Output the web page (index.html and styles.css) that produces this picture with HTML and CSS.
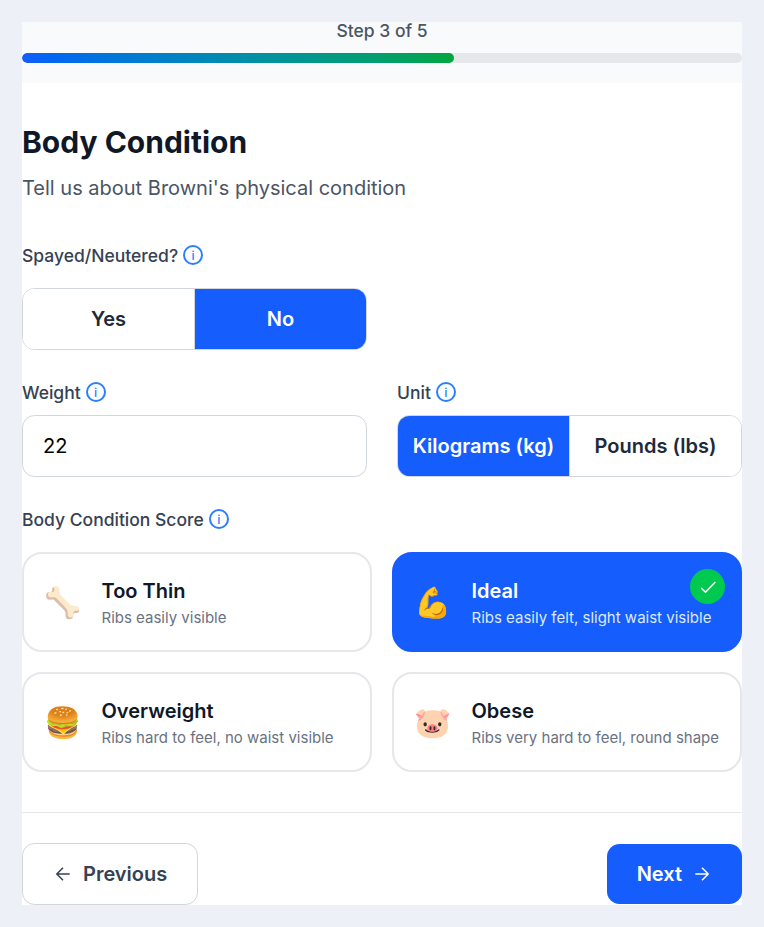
FILE: index.html
```html
<!DOCTYPE html>
<html lang="en">
<head>
    <meta charset="UTF-8">
    <meta name="viewport" content="width=device-width, initial-scale=1.0">
    <title>Body Condition</title>
    <link rel="stylesheet" href="styles.css">
</head>
<body>
    <main class="wizard">
        <header class="progress">
            <div class="progress-label">Step 3 of 5</div>
            <div class="progress-track">
                <div class="progress-fill" style="width: 60%"></div>
            </div>
        </header>

        <h1 class="title">Body Condition</h1>
        <p class="subtitle">Tell us about Browni's physical condition</p>

        <div class="row">
            <div class="field">
                <div class="label label-wide">Spayed/Neutered? <span class="info">i</span></div>
                <div class="toggle">
                    <button class="option">Yes</button>
                    <button class="option active">No</button>
                </div>
            </div>
        </div>

        <div class="row">
            <div class="field">
                <label class="label" for="weight">Weight <span class="info">i</span></label>
                <input class="input" id="weight" type="text" value="22">
            </div>
            <div class="field">
                <div class="label">Unit <span class="info">i</span></div>
                <div class="toggle">
                    <button class="option active">Kilograms (kg)</button>
                    <button class="option">Pounds (lbs)</button>
                </div>
            </div>
        </div>

        <div class="label label-wide">Body Condition Score <span class="info">i</span></div>
        <div class="scores">
            <div class="score">
                <span class="emoji">🦴</span>
                <div>
                    <div class="score-name">Too Thin</div>
                    <div class="score-text">Ribs easily visible</div>
                </div>
            </div>
            <div class="score selected">
                <span class="emoji">💪</span>
                <div>
                    <div class="score-name">Ideal</div>
                    <div class="score-text">Ribs easily felt, slight waist visible</div>
                </div>
                <span class="check">
                    <svg width="20" height="20" viewBox="0 0 20 20"><path d="M3.2 11l4.3 4.3L17.3 5"/></svg>
                </span>
            </div>
            <div class="score">
                <span class="emoji">🍔</span>
                <div>
                    <div class="score-name">Overweight</div>
                    <div class="score-text">Ribs hard to feel, no waist visible</div>
                </div>
            </div>
            <div class="score">
                <span class="emoji">🐷</span>
                <div>
                    <div class="score-name">Obese</div>
                    <div class="score-text">Ribs very hard to feel, round shape</div>
                </div>
            </div>
        </div>

        <footer class="actions">
            <button class="btn btn-prev">
                <svg width="20" height="20" viewBox="0 0 20 20"><path d="M16.7 10H4M10 3.8L3.8 10l6.2 6.2"/></svg>
                Previous
            </button>
            <button class="btn btn-next">
                Next
                <svg width="20" height="20" viewBox="0 0 20 20"><path d="M3.3 10H16M10 3.8l6.2 6.2-6.2 6.2"/></svg>
            </button>
        </footer>
    </main>
</body>
</html>
```
FILE: styles.css
```css
* {
    box-sizing: border-box;
}
body {
    margin: 0;
    padding: 22px;
    background-color: #edf0f6;
    font-family: Inter, sans-serif;
    font-size: 20px;
    color: #101828;
}
button,
input {
    font: inherit;
    margin: 0;
}
svg {
    display: block;
    fill: none;
    stroke: currentColor;
    stroke-width: 1.5;
}
.wizard {
    background-color: #fff;
}

/* progress */
.progress {
    height: 61px;
    background-color: #f9fafc;
}
.progress-label {
    height: 31px;
    line-height: 17px;
    font-size: 17.5px;
    font-weight: 500;
    text-align: center;
    color: #4a5565;
}
.progress-track {
    height: 10px;
    border-radius: 5px;
    background-color: #e5e7eb;
    overflow: hidden;
}
.progress-fill {
    height: 100%;
    border-radius: 5px;
    background: linear-gradient(to right in oklab, #155dfc, #00a63e);
}

.title {
    margin: 0;
    padding-top: 40px;
    font-size: 30px;
    line-height: 38px;
    font-weight: 700;
}
.subtitle {
    margin: 12px 0 42px;
    line-height: 30px;
    color: #4a5565;
}

/* form fields */
.row {
    display: grid;
    grid-template-columns: 1fr 1fr;
    gap: 30px;
    margin-bottom: 32px;
}
.label {
    display: flex;
    align-items: center;
    gap: 5px;
    height: 20px;
    margin-bottom: 13px;
    font-size: 17.5px;
    font-weight: 500;
    color: #364153;
}
.label-wide {
    margin-bottom: 23px;
}
.info {
    width: 20px;
    height: 20px;
    border: 2px solid #2b7fff;
    border-radius: 50%;
    font-size: 12.5px;
    line-height: 17px;
    text-align: center;
    color: #2b7fff;
}
.toggle {
    display: flex;
    height: 62px;
    border: 1px solid #d1d5dc;
    border-radius: 12.5px;
    overflow: hidden;
}
.option {
    flex: 1 1 0;
    padding: 0;
    border: 0;
    background-color: #fff;
    font-weight: 600;
    white-space: nowrap;
    color: #1e2939;
}
.option + .option {
    border-left: 1px solid #d1d5dc;
}
.option.active {
    background-color: #155dfc;
    color: #fff;
}
.input {
    display: block;
    width: 100%;
    height: 62px;
    padding: 0 20px;
    border: 1px solid #d1d5dc;
    border-radius: 12.5px;
    background-color: #fff;
    color: #000;
}

/* condition cards */
.scores {
    display: grid;
    grid-template-columns: 1fr 1fr;
    gap: 20px;
}
.score {
    position: relative;
    display: flex;
    align-items: center;
    height: 100px;
    padding: 0 20px;
    border: 2px solid #e5e7eb;
    border-radius: 20px;
    white-space: nowrap;
}
.emoji {
    width: 57.5px;
    font-size: 30px;
    line-height: 40px;
}
.score-name {
    font-weight: 600;
    line-height: 30px;
}
.score-text {
    font-size: 15px;
    line-height: 20px;
    margin-top: 2px;
    color: #6a7282;
}
.selected {
    border-color: #155dfc;
    background-color: #155dfc;
}
.selected .score-name {
    color: #fff;
}
.selected .score-text {
    color: #dbeafe;
}
.check {
    position: absolute;
    top: 15px;
    right: 15px;
    display: flex;
    align-items: center;
    justify-content: center;
    width: 35px;
    height: 35px;
    border-radius: 50%;
    background-color: #00c950;
    color: #fff;
}

/* footer buttons */
.actions {
    display: flex;
    justify-content: space-between;
    align-items: center;
    margin-top: 40px;
    padding-top: 30px;
    border-top: 1px solid #e5e7eb;
}
.btn {
    display: flex;
    align-items: center;
    gap: 10px;
    height: 60px;
    padding: 0 30px;
    border: 0;
    border-radius: 12.5px;
    font-weight: 600;
}
.btn-prev {
    height: 62px;
    border: 1px solid #d1d5dc;
    background-color: #fff;
    color: #364153;
}
.btn-next {
    background-color: #155dfc;
    color: #fff;
}
```
